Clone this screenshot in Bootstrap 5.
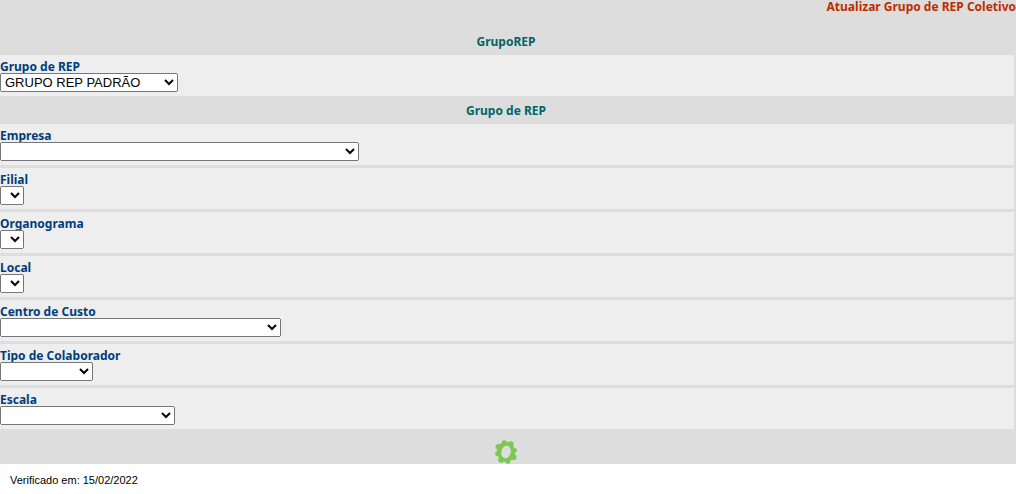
<!DOCTYPE html>
<html lang="pt-BR">
<head>
<meta charset="utf-8">
<meta name="viewport" content="width=device-width, initial-scale=1">
<title>Atualizar Grupo de REP Coletivo</title>
<link href="https://cdn.jsdelivr.net/npm/bootstrap@5.3.0/dist/css/bootstrap.min.css" rel="stylesheet">
<style>
body { font-family: "Liberation Sans", Arial, sans-serif; color: #000; }
.panel { background: #ddd; font: 700 12px/14px "Noto Sans", Tahoma, sans-serif; }
.page-title { color: #be2c00; font: inherit; line-height: 13px; height: 27px; }
.section-title { color: #006666; font: inherit; height: 28px; padding-top: 8px; }
.rows { gap: 3px; margin-right: 2px; }
.field-row { background: #eee; height: 41px; padding-top: 4px; }
.field-row label { color: #003d7d; line-height: 16px; height: 14px; }
.field-row select { font: 13px "Liberation Sans", Arial, sans-serif; height: 19px; color: #000; }
.w-group { width: 178px; }
.w-company { width: 359px; }
.w-empty { width: 24px; }
.w-cost { width: 281px; }
.w-type { width: 93px; }
.w-shift { width: 175px; }
.actions { height: 35px; padding-top: 11px; }
.verified { font-size: 11px; line-height: 12px; padding: 10px; }
</style>
</head>
<body>
<main class="panel">
  <h1 class="page-title text-end m-0">Atualizar Grupo de REP Coletivo</h1>
  <form>
    <h2 class="section-title text-center m-0 pe-1">GrupoREP</h2>
    <div class="rows d-flex flex-column">
      <div class="field-row d-flex flex-column align-items-start"><label for="grupo">Grupo de REP</label><select id="grupo" class="w-group"><option>GRUPO REP PADRÃO</option></select></div>
    </div>
    <h2 class="section-title text-center m-0 pe-1">Grupo de REP</h2>
    <div class="rows d-flex flex-column">
      <div class="field-row d-flex flex-column align-items-start"><label for="empresa">Empresa</label><select id="empresa" class="w-company"><option></option></select></div>
      <div class="field-row d-flex flex-column align-items-start"><label for="filial">Filial</label><select id="filial" class="w-empty"></select></div>
      <div class="field-row d-flex flex-column align-items-start"><label for="organograma">Organograma</label><select id="organograma" class="w-empty"></select></div>
      <div class="field-row d-flex flex-column align-items-start"><label for="local">Local</label><select id="local" class="w-empty"></select></div>
      <div class="field-row d-flex flex-column align-items-start"><label for="custo">Centro de Custo</label><select id="custo" class="w-cost"><option></option></select></div>
      <div class="field-row d-flex flex-column align-items-start"><label for="tipo">Tipo de Colaborador</label><select id="tipo" class="w-type"><option></option></select></div>
      <div class="field-row d-flex flex-column align-items-start"><label for="escala">Escala</label><select id="escala" class="w-shift"><option></option></select></div>
    </div>
    <div class="actions d-flex justify-content-center align-items-start pe-1">
      <button type="submit" class="btn p-0 border-0 d-flex rounded-0" aria-label="Processar">
        <svg width="22" height="24" viewBox="0 0 22 24" aria-hidden="true">
          <g fill="#7dc855" transform="rotate(-12 11 12)">
            <ellipse cx="11" cy="12" rx="9" ry="10"/>
            <circle cx="11" cy="3" r="3"/>
            <circle cx="17.3" cy="5.4" r="3"/>
            <circle cx="19" cy="12" r="3"/>
            <circle cx="17.3" cy="18.6" r="3"/>
            <circle cx="11" cy="21" r="3"/>
            <circle cx="4.7" cy="18.6" r="3"/>
            <circle cx="3" cy="12" r="3"/>
            <circle cx="4.7" cy="5.4" r="3"/>
          </g>
          <g fill="#ddd">
            <ellipse cx="11" cy="12" rx="4.7" ry="6.3" transform="rotate(12 11 12)"/>
            <circle cx="12.4" cy="0.6" r="1.1"/>
            <circle cx="20" cy="7.5" r="1"/>
            <circle cx="21" cy="13.6" r="1.1"/>
            <circle cx="16.4" cy="22.2" r="1.4"/>
            <circle cx="9.2" cy="23.6" r="1.2"/>
            <circle cx="1.8" cy="17" r="1.1"/>
            <circle cx="0.9" cy="9.8" r="1.2"/>
            <circle cx="5.4" cy="2.2" r="1.4"/>
          </g>
        </svg>
      </button>
    </div>
  </form>
</main>
<footer class="verified">Verificado em: 15/02/2022</footer>
<script src="https://cdn.jsdelivr.net/npm/bootstrap@5.3.0/dist/js/bootstrap.bundle.min.js"></script>
</body>
</html>
